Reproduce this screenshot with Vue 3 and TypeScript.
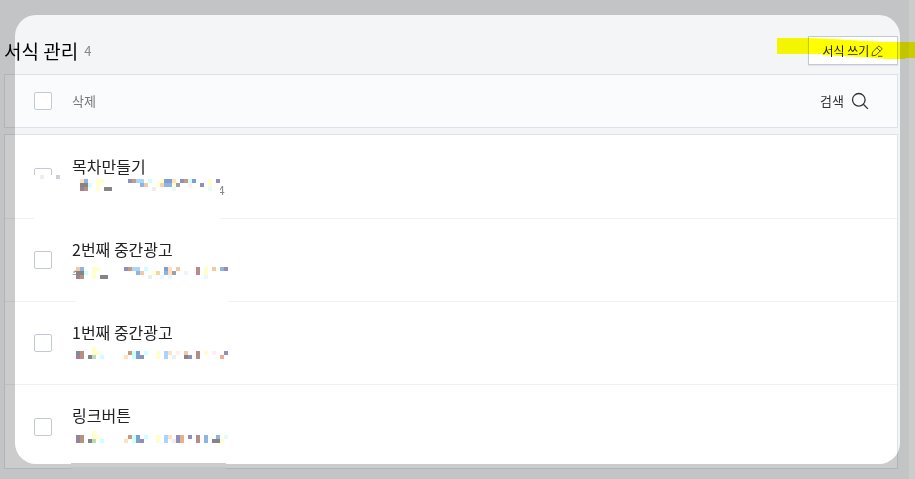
<script setup lang="ts">
import { ref } from 'vue'

interface Cell { x: number; y: number; w: number; color: string }
interface Cover { x: number; y: number; w: number; h: number }
interface Template {
  id: number
  title: string
  date: string
  dateAtEnd: boolean
  left: number
  top: number
  cover: Cover
  cells: Cell[]
}

const palette: Record<string, string> = {
  o: '#ffe0bf', b: '#8fb3e3', y: '#ffffcc', p: '#8f8fbb', n: '#c99a80', s: '#a8d4ff',
  c: '#ccffff', d: '#7f9fd0', g: '#858585', e: '#f5c9a0', t: '#ecd8a8', h: '#a0a0a0',
  r: '#fff0f0', m: '#a08090', w: '#b89080', l: '#eeeeee', i: '#e8f8ff', k: '#b58c8c',
  v: '#b8dcc0', q: '#e5b08a', a: '#848a98',
}

// One character per 4px square; a dot leaves the square empty.
function mosaic(lines: string[]): Cell[] {
  const cells: Cell[] = []
  lines.forEach((line, row) => {
    Array.from(line).forEach((ch, col) => {
      if (ch !== '.') cells.push({ x: col * 4, y: row * 4, w: 4, color: palette[ch] })
    })
  })
  return cells
}

const templates: Template[] = [
  {
    id: 1, title: '목차만들기', date: '4', dateAtEnd: true, left: 80, top: 43,
    cover: { x: -46, y: -4, w: 186, h: 44 },
    cells: mosaic([
      'ob..yy......pnss.c..yddo.pncd...y.p',
      'ggc.y..........be..ytbbyh..r..p.y..',
      'mw..y.gg..........l....i........i..',
    ]),
  },
  {
    id: 2, title: '2번째 중간광고', date: '수', dateAtEnd: false, left: 76, top: 48,
    cover: { x: 0, y: -4, w: 152, h: 40 },
    cells: mosaic([
      'eb..yy......pnss.c....do.e....k.y.e.bp',
      'ggc.y..........be..yt.boh..i..k.y.....',
      'mw..y.gg..........l..i.i........i.....',
    ]),
  },
  {
    id: 3, title: '1번째 중간광고', date: '', dateAtEnd: false, left: 76, top: 45,
    cover: { x: 0, y: 0, w: 152, h: 16 },
    cells: mosaic([
      '....y.................................',
      'aw..yy.......ncd.c..y.so.r.e..k.y.r..p',
      'mw.gv.c.....o.cdp...y.s.l..gp.k.....q.',
    ]),
  },
  {
    id: 4, title: '링크버튼', date: '', dateAtEnd: false, left: 76, top: 46,
    cover: { x: 0, y: 0, w: 152, h: 16 },
    cells: mosaic([
      '....y.................................',
      'aw..yy.......ncd.c..y.so.pq.p.k.b..b.i',
      'mw.gv.c.....o.cdp...y.s.lpq...k.b.ggy.',
    ]),
  },
]

const selected = ref<number[]>([])
const all = ref(false)
function toggleAll(): void {
  selected.value = all.value ? templates.map((t) => t.id) : []
}
</script>

<template>
  <div class="page">
    <main class="content">
      <header class="heading">
        <div class="title">
          <h1>서식 관리</h1>
          <span class="count">{{ templates.length }}</span>
        </div>
        <button type="button" class="write">
          서식 쓰기
          <svg width="12" height="12" viewBox="0 0 12 12" fill="none" stroke="#555" aria-hidden="true">
            <path d="M1 10.8 1.5 7.2 7.2 1.4Q8 .7 8.8 1.4L10.6 3.2Q11.3 4 10.6 4.7L4.8 10.3 1 10.8ZM5.8 2.8 9.2 6.1M7 11.3H11.5" />
          </svg>
        </button>
      </header>

      <div class="toolbar">
        <input v-model="all" type="checkbox" class="check" aria-label="전체 선택" @change="toggleAll" />
        <button type="button" class="remove">삭제</button>
        <button type="button" class="search">
          검색
          <svg width="18" height="18" viewBox="0 0 18 18" fill="none" stroke="#333" stroke-width="1.3" aria-hidden="true">
            <circle cx="7.8" cy="7.8" r="6.3" />
            <path d="m12.3 12.3 4.6 4.6" />
          </svg>
        </button>
      </div>

      <ul class="list">
        <li v-for="t in templates" :key="t.id" class="row">
          <input :id="`template-${t.id}`" v-model="selected" type="checkbox" class="check" :value="t.id" />
          <div class="info">
            <label :for="`template-${t.id}`" class="name">{{ t.title }}</label>
            <span class="date" :class="{ end: t.dateAtEnd }">{{ t.date }}</span>
          </div>
          <svg class="mask" :style="{ left: `${t.left - 5}px`, top: `${t.top}px` }" width="152" height="12" shape-rendering="crispEdges" aria-hidden="true">
            <rect :x="t.cover.x" :y="t.cover.y" :width="t.cover.w" :height="t.cover.h" fill="#fff" />
            <rect v-for="(c, i) in t.cells" :key="i" :x="c.x" :y="c.y" :width="c.w" height="4" :fill="c.color" />
            <template v-if="t.id === 1">
              <rect x="-40" y="-4" width="4" height="4" fill="#eee" />
              <rect x="-24" y="-4" width="4" height="4" fill="#cbd0d9" />
            </template>
          </svg>
        </li>
      </ul>
    </main>
    <svg class="marker" width="138" height="21" viewBox="0 0 138 21" aria-hidden="true">
      <path d="M0 0H31L55 1 89 3 107 4H138V20H128V21H111L84 19 45 17V16H0Z" fill="#ff0" />
    </svg>
    <div class="shade"></div>
    <svg class="patch" width="155" height="6" aria-hidden="true">
      <rect width="155" height="4" fill="#ccc" />
      <rect y="4" width="155" height="2" fill="#c3c4c6" />
    </svg>
  </div>
</template>

<style>
body {
  margin: 0;
}
</style>

<style scoped>
.page {
  position: relative;
  box-sizing: border-box;
  min-height: 100vh;
  padding-right: 6px;
  overflow: hidden;
  background: #fff;
  color: #222;
  font-family: "Noto Sans CJK KR", "Noto Sans", sans-serif;
}
.content {
  box-sizing: border-box;
  min-height: 100vh;
  padding: 36px 11px 10px 4px;
  background: #f4f5f7;
}
.heading {
  display: flex;
  justify-content: space-between;
  height: 38px;
}
.title {
  display: flex;
  align-items: center;
  gap: 6px;
  height: 30px;
}
h1 {
  margin: 0;
  color: #000;
  font-size: 19px;
  font-weight: 400;
  line-height: 30px;
}
.count {
  color: #888;
  font-size: 13px;
  line-height: 30px;
}
button {
  display: flex;
  align-items: center;
  padding: 0;
  border: 0;
  background: none;
  color: #333;
  font-family: inherit;
  font-size: 13px;
}
.write {
  justify-content: center;
  gap: 2px;
  width: 90px;
  height: 29px;
  border: 1px solid #c2cad5;
  box-shadow: 0 1px 1px #e2e5ea;
  background: #fff;
  color: #222;
  font-size: 12px;
}
.toolbar {
  display: flex;
  align-items: center;
  box-sizing: border-box;
  height: 54px;
  margin-bottom: 6px;
  padding: 0 28px 0 29px;
  border: 1px solid #dce2ea;
  background: #fafbfd;
}
.check {
  flex: none;
  box-sizing: border-box;
  width: 18px;
  height: 18px;
  margin: 0;
  border: 1px solid #c3cad6;
  border-radius: 2px;
  background: #fff;
  appearance: none;
}
.check:checked {
  background: #7d8da5;
}
.remove {
  margin-left: 20px;
  padding-bottom: 2px;
  color: #777;
}
.search {
  gap: 7px;
  margin-left: auto;
  padding-bottom: 1px;
}
.list {
  display: grid;
  grid-auto-rows: 1fr;
  box-sizing: border-box;
  min-height: 335px;
  margin: 0;
  padding: 1px 0 0;
  border: 1px solid #dce2ea;
  background: #fff;
  list-style: none;
}
.row {
  position: relative;
  display: flex;
  align-items: center;
  gap: 20px;
  padding: 0 29px;
  border-bottom: 1px solid #f0f1f3;
}
.row:last-child {
  border-bottom: 0;
}
.info {
  display: flex;
  flex-direction: column;
  align-self: flex-start;
  padding-top: 18px;
}
.name {
  font-size: 16px;
  line-height: 24px;
}
.date {
  margin-top: 3px;
  color: #888;
  font-size: 12px;
  line-height: 18px;
}
.date.end {
  padding-left: 146px;
}
.mask {
  position: absolute;
  z-index: 1;
  overflow: visible;
}
.marker {
  position: absolute;
  z-index: 2;
  top: 38px;
  right: 0;
  mix-blend-mode: multiply;
}
.shade {
  position: absolute;
  z-index: 3;
  inset: 15px;
  border-radius: 21px;
  box-shadow: 0 0 0 40px rgba(0, 0, 0, 0.2);
  pointer-events: none;
}
.patch {
  position: absolute;
  z-index: 4;
  bottom: 10px;
  left: 71px;
}
</style>
